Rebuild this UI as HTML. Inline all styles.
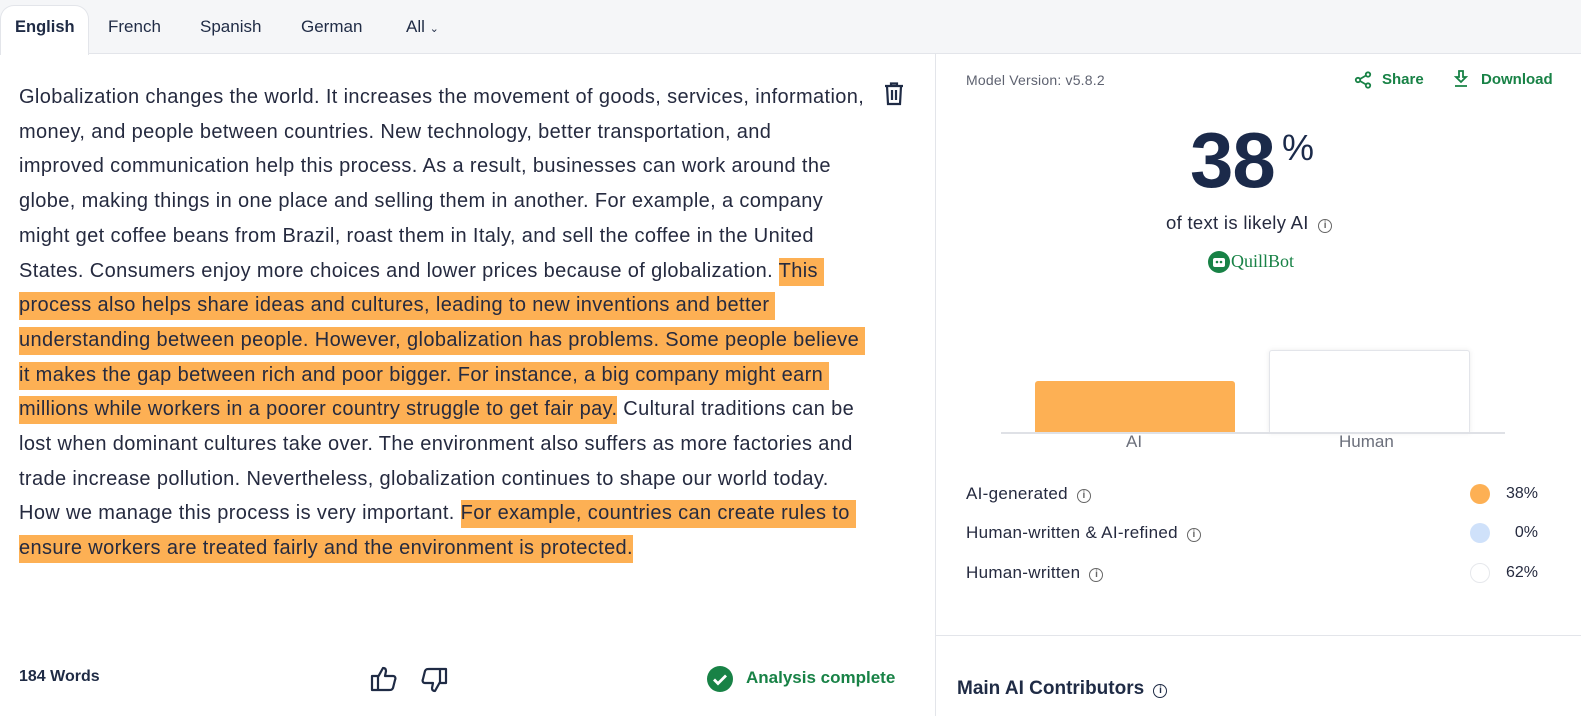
<!DOCTYPE html>
<html><head><style>
*{margin:0;padding:0;box-sizing:border-box}
body{width:1581px;height:716px;overflow:hidden;background:#fff;font-family:"Liberation Sans",sans-serif;color:#252a3f;position:relative}
.tabs{position:absolute;left:0;top:0;width:1581px;height:54px;background:#f5f6f8;border-bottom:1px solid #e3e5ea}
.tab{position:absolute;top:17px;font-size:17px;color:#1f2b45}
.tab.active{left:0;top:5px;width:89px;height:50px;background:#fff;border-radius:14px 14px 0 0;border:1px solid #e3e5ea;border-bottom:none;padding:12px 0 0 14px;font-weight:bold;font-size:16.5px}
.text{position:absolute;left:19px;top:80px;font-size:20px;line-height:34.7px;color:#252a3f;letter-spacing:0.37px}
.text div{white-space:nowrap}
.h{background:#fdb054;padding:2px 0 4px}
.vline{position:absolute;left:935px;top:54px;width:1px;height:662px;background:#e3e5ea}
.hline{position:absolute;left:936px;top:635px;width:645px;height:1px;background:#e3e5ea}
.green{color:#188246;font-weight:bold;font-size:15px}
.info{display:inline-block;width:14px;height:14px;border:1.2px solid #666;border-radius:50%;font-size:10px;line-height:12px;text-align:center;color:#666;vertical-align:1px;margin-left:4px;font-weight:bold;letter-spacing:0}
.row{position:absolute;left:966px;font-size:17px;color:#252a3f;letter-spacing:0.3px}
.dot{position:absolute;left:1470px;width:20px;height:20px;border-radius:50%}
.val{position:absolute;right:43px;font-size:16px;color:#252a3f}
</style></head><body>
<div class="tabs">
 <div class="tab active">English</div>
 <div class="tab" style="left:108px">French</div>
 <div class="tab" style="left:200px">Spanish</div>
 <div class="tab" style="left:301px">German</div>
 <div class="tab" style="left:406px">All <span style="font-size:11px">&#8964;</span></div>
</div>
<svg style="position:absolute;left:883px;top:82px" width="22" height="24" viewBox="0 0 22 24" fill="none" stroke="#1f2b45" stroke-width="2.2"><path d="M2 4h18M8 4V1.5h6V4M4 4l1 18h12l1-18M9 8v10M13 8v10"/></svg>
<div class="text">
<div>Globalization changes the world. It increases the movement of goods, services, information,</div>
<div>money, and people between countries. New technology, better transportation, and</div>
<div>improved communication help this process. As a result, businesses can work around the</div>
<div>globe, making things in one place and selling them in another. For example, a company</div>
<div>might get coffee beans from Brazil, roast them in Italy, and sell the coffee in the United</div>
<div>States. Consumers enjoy more choices and lower prices because of globalization. <span class="h">This&nbsp;</span></div>
<div><span class="h">process also helps share ideas and cultures, leading to new inventions and better&nbsp;</span></div>
<div><span class="h">understanding between people. However, globalization has problems. Some people believe&nbsp;</span></div>
<div><span class="h">it makes the gap between rich and poor bigger. For instance, a big company might earn&nbsp;</span></div>
<div><span class="h">millions while workers in a poorer country struggle to get fair pay.</span> Cultural traditions can be</div>
<div>lost when dominant cultures take over. The environment also suffers as more factories and</div>
<div>trade increase pollution. Nevertheless, globalization continues to shape our world today.</div>
<div>How we manage this process is very important. <span class="h">For example, countries can create rules to&nbsp;</span></div>
<div><span class="h">ensure workers are treated fairly and the environment is protected.</span></div>
</div>
<div style="position:absolute;left:19px;top:668px;font-size:16px;font-weight:bold;color:#1f2b45">184 Words</div>
<svg style="position:absolute;left:370px;top:665px" width="30" height="27" viewBox="0 0 30 27" fill="none" stroke="#1f2b45" stroke-width="2.2" stroke-linejoin="round"><path d="M2 11h6v14H2zM8 12l5-9c2 0 3 1 3 3l-1 5h8c2 0 3 2 2 4l-2 8c-1 2-2 2-4 2H8"/></svg>
<svg style="position:absolute;left:418px;top:667px" width="30" height="27" viewBox="0 0 30 27" fill="none" stroke="#1f2b45" stroke-width="2.2" stroke-linejoin="round"><path d="M22 2h6v14h-6zM22 15l-5 9c-2 0-3-1-3-3l1-5H7c-2 0-3-2-2-4l2-8c1-2 2-2 4-2h11"/></svg>
<svg style="position:absolute;left:707px;top:666px" width="26" height="26"><circle cx="13" cy="13" r="13" fill="#188246"/><path d="M7 13.5l4 4 8-8" stroke="#fff" stroke-width="2.8" fill="none"/></svg>
<div style="position:absolute;left:746px;top:668px;font-size:17px;color:#188246;font-weight:bold">Analysis complete</div>
<div class="vline"></div><div class="hline"></div>
<div style="position:absolute;left:966px;top:72px;font-size:14px;color:#5e6270;letter-spacing:0.2px">Model Version: v5.8.2</div>
<svg style="position:absolute;left:1354px;top:71px" width="18" height="18" viewBox="0 0 18 18" fill="none" stroke="#188246" stroke-width="1.8"><circle cx="14" cy="3.5" r="2.2"/><circle cx="4" cy="9" r="2.2"/><circle cx="14" cy="14.5" r="2.2"/><path d="M6 8l6-3.5M6 10l6 3.5"/></svg>
<div class="green" style="position:absolute;left:1382px;top:71px">Share</div>
<svg style="position:absolute;left:1453px;top:70px" width="16" height="18" viewBox="0 0 16 18" fill="none" stroke="#188246" stroke-width="1.8"><path d="M6 1h4v6h3l-5 5-5-5h3zM2 16h12"/></svg>
<div class="green" style="position:absolute;left:1481px;top:71px">Download</div>
<div style="position:absolute;left:1190px;top:115px;font-size:78px;font-weight:bold;color:#1b2a4a;letter-spacing:-1px;line-height:90px">38<span style="position:absolute;left:92px;top:-12px;font-size:36px;font-weight:normal">%</span></div>
<div style="position:absolute;left:1166px;top:212px;font-size:18.5px;color:#252a3f;letter-spacing:0.3px">of text is likely AI <span class="info">i</span></div>
<svg style="position:absolute;left:1208px;top:251px" width="22" height="22"><circle cx="11" cy="11" r="11" fill="#188246"/><rect x="5" y="7" width="12" height="9" rx="2" fill="#fff"/><circle cx="9" cy="11" r="1.3" fill="#188246"/><circle cx="13" cy="11" r="1.3" fill="#188246"/></svg>
<div style="position:absolute;left:1231px;top:251px;font-family:'Liberation Serif',serif;font-size:18px;color:#188246">QuillBot</div>
<div style="position:absolute;left:1035px;top:381px;width:200px;height:52px;background:#fdb054;border-radius:3px 3px 0 0"></div>
<div style="position:absolute;left:1269px;top:350px;width:201px;height:83px;background:#fff;border:1px solid #e3e5ea;border-bottom:none;border-radius:3px 3px 0 0;box-shadow:0 0 6px rgba(0,0,0,.08)"></div>
<div style="position:absolute;left:1001px;top:432px;width:504px;height:2px;background:#dfe1e6"></div>
<div style="position:absolute;left:1126px;top:432px;font-size:17px;color:#6b6f7b">AI</div>
<div style="position:absolute;left:1339px;top:432px;font-size:17px;color:#6b6f7b">Human</div>
<div class="row" style="top:484px">AI-generated <span class="info">i</span></div>
<div class="row" style="top:523px">Human-written &amp; AI-refined <span class="info">i</span></div>
<div class="row" style="top:563px">Human-written <span class="info">i</span></div>
<div class="dot" style="top:484px;background:#fdb054"></div>
<div class="dot" style="top:523px;background:#cfe1fa"></div>
<div class="dot" style="top:563px;background:#fff;border:1px solid #e6e8ec"></div>
<div class="val" style="top:485px">38%</div>
<div class="val" style="top:524px">0%</div>
<div class="val" style="top:564px">62%</div>
<div style="position:absolute;left:957px;top:678px;font-size:19px;font-weight:bold;color:#1f2b45">Main AI Contributors <span class="info" style="border-color:#1f2b45;color:#1f2b45">i</span></div>
</body></html>
